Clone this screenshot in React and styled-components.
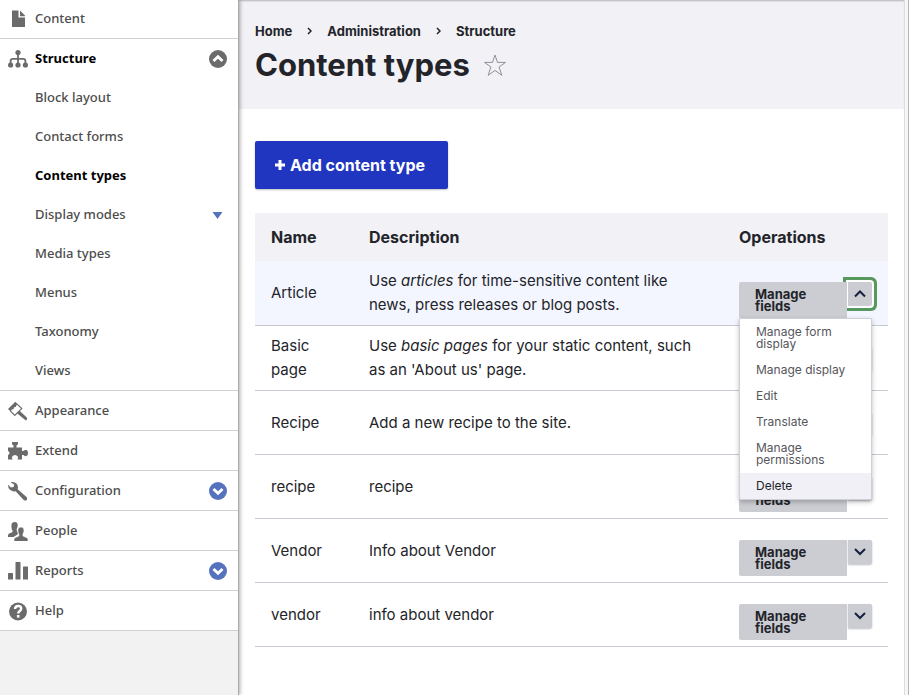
import React from "react";
import styled, { createGlobalStyle, css } from "styled-components";

const Global = createGlobalStyle`
  *, *::before, *::after { box-sizing: border-box; }
  body { margin: 0; background: #fff; color: #232429; font: 16px/24px Inter, sans-serif; }
  ul, ol { list-style: none; margin: 0; padding: 0; }
  a { color: inherit; text-decoration: none; }
  button { font: inherit; color: inherit; border: 0; cursor: pointer; }
`;

const Page = styled.div`
  display: flex;
  min-height: 100vh;
`;

const Sidebar = styled.nav`
  position: relative;
  z-index: 1;
  flex: 0 0 239px;
  border-right: 1px solid #aaa;
  background: #f2f2f2;
  box-shadow: 1px 0 4px rgba(0, 0, 0, 0.33);
  font-family: "Noto Sans", sans-serif;
  font-size: 13px;
`;

const MenuItem = styled.li`
  background: #fff;
  border-bottom: 1px solid #d0d0d0;
`;

const MenuRow = styled.div`
  display: flex;
  align-items: center;
  height: ${(p) => (p.$first ? 38 : 39)}px;
  padding: 0 10px 0 8px;
`;

const MenuLink = styled.a`
  display: flex;
  flex: 1;
  align-items: center;
  gap: 7px;
  color: ${(p) => (p.$active ? "#000" : "#4d4d4d")};
  font-weight: ${(p) => (p.$active ? 700 : 500)};
`;

const MenuLabel = styled.span`
  padding-bottom: 2px;
`;

const SubLink = styled(MenuLink)`
  padding-left: 27px;
`;

const MenuIcon = styled.svg`
  display: block;
  width: 20px;
  height: 20px;
  fill: #6b6b6b;
`;

const Toggle = styled.button`
  display: flex;
  padding: 0;
  background: none;
`;

const Main = styled.main`
  flex: 1;
  min-width: 0;
`;

const Gutter = styled.div`
  flex: 0 0 5px;
  border: solid #ddd;
  border-width: 0 1px;
  border-right-color: #b5b5b5;
  background: #f6f6f6;
`;

const Header = styled.header`
  padding: 19px 16px 22px;
  background: #f1f1f6;
  box-shadow: inset 0 2px 2px -1px rgba(0, 0, 0, 0.25);
`;

const Crumbs = styled.ol`
  display: flex;
  align-items: center;
  font-size: 13px;
  font-weight: 700;
`;

const Crumb = styled.li`
  display: flex;
  align-items: center;
`;

const CrumbArrow = styled.svg`
  margin: 0 15px;
`;

const TitleRow = styled.div`
  display: flex;
  align-items: center;
  gap: 13px;
`;

const Title = styled.h1`
  margin: 0;
  font-size: 31px;
  line-height: 44px;
`;

const Content = styled.div`
  padding: 32px 16px;
`;

const AddButton = styled.a`
  display: inline-flex;
  align-items: center;
  gap: 5px;
  height: 48px;
  padding: 0 23px 0 20px;
  border-radius: 2px;
  background: #2036c0;
  box-shadow: 0 1px 2px rgba(0, 0, 0, 0.25);
  color: #fff;
  font-weight: 700;
`;

const Table = styled.table`
  width: 100%;
  margin-top: 24px;
  border-collapse: separate;
  border-spacing: 0;
  table-layout: fixed;
`;

const Th = styled.th`
  width: ${(p) => p.$width || "auto"};
  height: 48px;
  padding: 0 16px;
  background: #f1f1f6;
  text-align: left;
`;

const Row = styled.tr`
  background: ${(p) => (p.$hover ? "#f3f6ff" : "#fff")};
`;

const Td = styled.td`
  height: 64px;
  padding: 8px 16px;
  border-bottom: 1px solid #c8c9d1;
  font-size: 15px;
`;

const DropButton = styled.div`
  position: relative;
  display: flex;
  align-items: flex-start;
  gap: 1px;
  height: 22px;
`;

const ActionButton = styled.button`
  position: relative;
  z-index: ${(p) => (p.$open ? 2 : 0)};
  flex: 1;
  padding: 6px 16px;
  border-radius: 2px 0 0 2px;
  background: #cccdd3;
  font-size: 13px;
  font-weight: 700;
  line-height: 12px;
  text-align: left;
`;

const ActionToggle = styled.button`
  display: grid;
  place-items: center;
  width: 24px;
  height: 24px;
  padding: 0;
  border-radius: 0 2px 2px 0;
  background: #cccdd3;
  box-shadow: 0 1px 2px rgba(0, 0, 0, 0.25);
  ${(p) =>
    p.$open &&
    css`
      z-index: 1;
      outline: none;
      box-shadow: 0 0 0 2px #fff, 0 0 0 5px #57985f;
    `}
`;

const ActionMenu = styled.ul`
  position: absolute;
  z-index: 3;
  top: 36px;
  left: 0;
  right: 0;
  border: 1px solid #cfd0d7;
  border-radius: 0 0 2px 2px;
  background: #fff;
  box-shadow: 0 2px 5px rgba(0, 0, 0, 0.25);
  font-size: 12px;
  line-height: 12px;
`;

const ActionLink = styled.a`
  display: block;
  padding: 7px 16px;
  background: ${(p) => (p.$hover ? "#f0f0f6" : "#fff")};
  color: ${(p) => (p.$hover ? "#232429" : "#55565b")};
`;

const ICONS = {
  Content: <path d="M4 1.500h6.500v7H17v9.500H4zM12 1.500 17 6.500v.8h-5z" />,
  Structure: (
    <g>
      <circle cx="10" cy="3.500" r="2.600" />
      <circle cx="2.600" cy="16" r="2.600" />
      <circle cx="10" cy="16" r="2.600" />
      <circle cx="17.400" cy="16" r="2.600" />
      <path d="M2.600 16v-4q0-2.200 2.200-2.200h10.400q2.200 0 2.200 2.200v4M10 4v12" fill="none" stroke="#6b6b6b" strokeWidth="1.800" />
    </g>
  ),
  Appearance: (
    <g>
      <path d="M0 8 7.300.8 10.200 3.400 8.400 4.200 7.800 6 6 6.300 5.500 8.300 3.700 8.500 2.800 10.800z" />
      <path d="M2.500 10.200 6.800 14.500 13.700 7.600 9.400 3.300" fill="none" stroke="#6b6b6b" strokeWidth="1.200" />
      <path d="m9 12.300 2.600-2.600 7.200 6.900q.9 1.400-.3 2.300-1 .6-1.900-.3z" />
    </g>
  ),
  Extend: (
    <path d="M0 6.500h5.500V4.500Q4 4 4 2.500V1h6v1.500Q10 4 8.500 4.500v2H14v3.500h1.500Q16.500 8.500 18.500 9 20 9.700 20 12t-1.500 3q-2 .5-3-1H14v4.500H9.500V18Q10.500 17 9.800 15.500 8.800 14 7 14t-2.800 1.500Q3.500 17 4.500 18v.5H0v-4.500q1.500-.5 1.500-2T0 10z" />
  ),
  Configuration: (
    <path d="M2.500 1.200Q6 .2 8.500 2.500 10.500 5 9.700 8.200l8.800 7.900q1.300 1.600.1 2.900-1.500 1.200-2.900-.1l-8.100-8.700Q4 11 1.700 8.600-.2 6.500.2 3.800L2.800 6.600 5.700 6 6.200 3.500z" />
  ),
  People: (
    <g>
      <path d="M6.700 1q3 0 3 3 0 1.800-.5 2.800-.6 1-.5 2.200l.2 1q1.300 2 .9 3.300L5.500 16H0v-2q.5-1.700 3-2.200 1.700-.4 1.600-1.300 0-1-.7-2-.5-1.500-.5-4.500Q3.800 1 6.700 1z" />
      <path d="M13 6q3 0 3 3.200 0 1.800-.6 2.800-.7 1.200-.5 2.400 0 .9 1.800 1.400Q19.500 16.500 20 18v2.500H6V18q.5-1.600 3.200-2.200 1.800-.5 1.800-1.500 0-1.200-.6-2.200Q9.800 11 9.800 9.200 10 6 13 6z" stroke="#fff" strokeWidth=".6" />
    </g>
  ),
  Reports: (
    <g>
      <rect x="0" y="12" width="5" height="6.500" rx=".5" />
      <rect x="7.500" y="1" width="5" height="17.500" rx=".5" />
      <rect x="15" y="5.500" width="5" height="13" rx=".5" />
    </g>
  ),
  Help: (
    <g>
      <circle cx="10" cy="10.500" r="9" />
      <path d="M7 8q.3-3 3.200-3 3 0 3 2.600 0 1.500-1.700 2.600-1.300 1-1.300 2.300" fill="none" stroke="#fff" strokeWidth="2.400" />
      <rect x="8.900" y="14" width="2.600" height="2.600" fill="#fff" />
    </g>
  ),
};

const MENU = [
  { label: "Content" },
  {
    label: "Structure",
    open: true,
    children: ["Block layout", "Contact forms", "Content types", "Display modes", "Media types", "Menus", "Taxonomy", "Views"],
  },
  { label: "Appearance" },
  { label: "Extend" },
  { label: "Configuration", more: true },
  { label: "People" },
  { label: "Reports", more: true },
  { label: "Help" },
];

const TYPES = [
  { id: "article", name: "Article", text: <>Use <em>articles</em> for time-sensitive content like news, press releases or blog posts.</>, open: true },
  { id: "page", name: "Basic page", text: <>Use <em>basic pages</em> for your static content, such as an 'About us' page.</> },
  { id: "recipe", name: "Recipe", text: "Add a new recipe to the site." },
  { id: "recipe2", name: "recipe", text: "recipe" },
  { id: "vendor", name: "Vendor", text: "Info about Vendor" },
  { id: "vendor2", name: "vendor", text: "info about vendor" },
];

const ACTIONS = ["Manage form display", "Manage display", "Edit", "Translate", "Manage permissions", "Delete"];

function RoundToggle({ open, label }) {
  return (
    <Toggle type="button" aria-label={label} aria-expanded={!!open}>
      <svg width="20" height="20" viewBox="0 0 20 20">
        <circle cx="10" cy="10" r="9" fill={open ? "#6b6b6b" : "#5573bd"} />
        <path d={open ? "m5.500 12 4.500-4.300 4.500 4.300" : "m5.500 8 4.500 4.300 4.500-4.300"} fill="none" stroke="#fff" strokeWidth="2.800" />
      </svg>
    </Toggle>
  );
}

function Side() {
  return (
    <Sidebar aria-label="Administration menu">
      <ul>
        {MENU.map((item, i) => (
          <MenuItem key={item.label}>
            <MenuRow $first={i === 0}>
              <MenuLink href="#" $active={item.open}>
                <MenuIcon viewBox="0 0 20 20" aria-hidden="true">{ICONS[item.label]}</MenuIcon>
                <MenuLabel>{item.label}</MenuLabel>
              </MenuLink>
              {(item.open || item.more) && <RoundToggle open={item.open} label={`Toggle ${item.label}`} />}
            </MenuRow>
            {item.children && (
              <ul>
                {item.children.map((child) => (
                  <li key={child}>
                    <MenuRow>
                      <SubLink href="#" $active={child === "Content types"}>
                        <MenuLabel>{child}</MenuLabel>
                      </SubLink>
                      {child === "Display modes" && (
                        <Toggle type="button" aria-label="Toggle Display modes">
                          <svg width="20" height="20" viewBox="0 0 20 20"><path d="M4.500 7h10l-5 7z" fill="#5573bd" /></svg>
                        </Toggle>
                      )}
                    </MenuRow>
                  </li>
                ))}
              </ul>
            )}
          </MenuItem>
        ))}
      </ul>
    </Sidebar>
  );
}

function Operations({ open }) {
  return (
    <DropButton>
      <ActionButton type="button" $open={open}>Manage fields</ActionButton>
      <ActionToggle type="button" $open={open} aria-expanded={!!open} aria-label="List additional actions">
        <svg width="14" height="14" viewBox="0 0 14 14" fill="none" stroke="#18203f" strokeWidth="2">
          <path d={open ? "m2 9.500 5-5 5 5" : "m2 4 5 5 5-5"} />
        </svg>
      </ActionToggle>
      {open && (
        <ActionMenu>
          {ACTIONS.map((a) => (
            <li key={a}><ActionLink href="#" $hover={a === "Delete"}>{a}</ActionLink></li>
          ))}
        </ActionMenu>
      )}
    </DropButton>
  );
}

export default function App() {
  return (
    <>
      <Global />
      <Page>
        <Side />
        <Main>
          <Header>
            <nav aria-label="Breadcrumb">
              <Crumbs>
                {["Home", "Administration", "Structure"].map((c, i) => (
                  <Crumb key={c}>
                    {i > 0 && (
                      <CrumbArrow width="5" height="8" viewBox="0 0 5 8" fill="none" stroke="#232429" strokeWidth="1.500">
                        <path d="m1 1 3 3-3 3" />
                      </CrumbArrow>
                    )}
                    <a href="#">{c}</a>
                  </Crumb>
                ))}
              </Crumbs>
            </nav>
            <TitleRow>
              <Title>Content types</Title>
              <Toggle type="button" aria-label="Add to shortcuts">
                <svg width="24" height="24" viewBox="0 0 24 24" fill="none" stroke="#8e929c" strokeWidth="1">
                  <path d="m12 2 2.500 7.400h8L16.100 14l2.700 8.300-6.800-4.900-6.800 4.900L7.900 14 1.500 9.400h8z" />
                </svg>
              </Toggle>
            </TitleRow>
          </Header>
          <Content>
            <AddButton href="#">
              <svg width="10" height="10" viewBox="0 0 10 10" stroke="#fff" strokeWidth="3"><path d="M0 5h10M5 0v10" /></svg>
              Add content type
            </AddButton>
            <Table>
              <thead>
                <tr>
                  <Th scope="col" $width="98px">Name</Th>
                  <Th scope="col">Description</Th>
                  <Th scope="col" $width="165px">Operations</Th>
                </tr>
              </thead>
              <tbody>
                {TYPES.map((t) => (
                  <Row key={t.id} $hover={t.open}>
                    <Td>{t.name}</Td>
                    <Td>{t.text}</Td>
                    <Td><Operations open={t.open} /></Td>
                  </Row>
                ))}
              </tbody>
            </Table>
          </Content>
        </Main>
        <Gutter />
      </Page>
    </>
  );
}
